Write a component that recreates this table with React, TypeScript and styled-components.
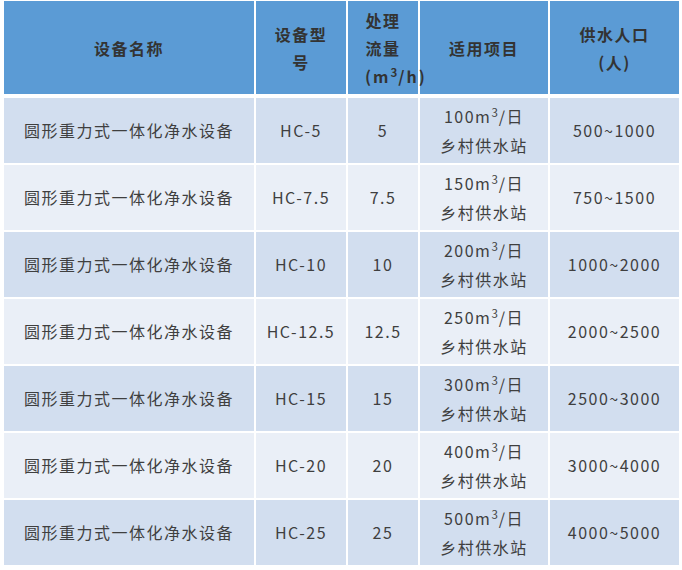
import React from 'react';
import styled, {createGlobalStyle} from 'styled-components';

const GlobalStyle = createGlobalStyle`
    html, body {
        margin: 0;
        padding: 0;
        background: #ffffff;
    }
    body {
        font-family: 'Noto Sans CJK SC', 'Noto Sans', sans-serif;
    }
`;

const COLUMNS = '250px 90px 70px 128px 129px';

const Page = styled.div`
    padding: 1px 0 0 4px;
`;

const Table = styled.div`
    display: flex;
    flex-direction: column;
    gap: 4px;
    width: 675px;
`;

const HeaderRow = styled.div`
    display: grid;
    grid-template-columns: ${COLUMNS};
    column-gap: 2px;
    height: 93px;
`;

const Body = styled.div`
    display: flex;
    flex-direction: column;
    gap: 2px;
`;

const Row = styled.div<{$alt: boolean}>`
    display: grid;
    grid-template-columns: ${COLUMNS};
    column-gap: 2px;
    height: 65px;

    & > div {
        background: ${(p) => (p.$alt ? '#eaeff7' : '#d2deef')};
    }
`;

// $over lifts a cell whose text runs past its right edge above the next cell
const HeadCell = styled.div<{$pad?: number; $over?: boolean}>`
    position: ${(p) => (p.$over ? 'relative' : 'static')};
    z-index: ${(p) => (p.$over ? 2 : 'auto')};
    display: flex;
    flex-direction: column;
    justify-content: center;
    text-align: center;
    padding: 0 ${(p) => p.$pad ?? 8}px;
    background: #5b9bd5;
    color: #333333;
    font-size: 16px;
    font-weight: 700;
    letter-spacing: 1.5px;
    line-height: 28px;
    white-space: nowrap;
    min-width: 0;
`;

const Cell = styled.div`
    display: flex;
    flex-direction: column;
    justify-content: center;
    text-align: center;
    padding: 0 6px;
    color: #3f3f3f;
    font-size: 16px;
    letter-spacing: 1.5px;
    line-height: 29px;
    white-space: nowrap;
    min-width: 0;
`;

const Line = styled.div<{$wide?: boolean}>`
    display: block;
    letter-spacing: ${(p) => (p.$wide ? '2px' : 'inherit')};
`;

const Sup = styled.sup`
    font-size: 0.72em;
    line-height: 0;
    vertical-align: 0.5em;
    letter-spacing: 1px;
`;

const rows = [
    {model: 'HC-5', flow: '5', daily: '100', people: '500~1000'},
    {model: 'HC-7.5', flow: '7.5', daily: '150', people: '750~1500'},
    {model: 'HC-10', flow: '10', daily: '200', people: '1000~2000'},
    {model: 'HC-12.5', flow: '12.5', daily: '250', people: '2000~2500'},
    {model: 'HC-15', flow: '15', daily: '300', people: '2500~3000'},
    {model: 'HC-20', flow: '20', daily: '400', people: '3000~4000'},
    {model: 'HC-25', flow: '25', daily: '500', people: '4000~5000'},
];

const App = () => {
    return (
        <Page>
            <GlobalStyle/>
            <Table>
                <HeaderRow>
                    <HeadCell>{'设备名称'}</HeadCell>
                    <HeadCell>
                        <Line>{'设备型'}</Line>
                        <Line>{'号'}</Line>
                    </HeadCell>
                    <HeadCell
                        $pad={17}
                        $over={true}
                    >
                        <Line>{'处理'}</Line>
                        <Line>{'流量'}</Line>
                        <Line $wide={true}>{'(m'}<Sup>{'3'}</Sup>{'/h)'}</Line>
                    </HeadCell>
                    <HeadCell>{'适用项目'}</HeadCell>
                    <HeadCell>
                        <Line>{'供水人口'}</Line>
                        <Line>{'(人)'}</Line>
                    </HeadCell>
                </HeaderRow>
                <Body>
                    {rows.map((r, i) => (
                        <Row
                            key={r.model}
                            $alt={i % 2 === 1}
                        >
                            <Cell>{'圆形重力式一体化净水设备'}</Cell>
                            <Cell>{r.model}</Cell>
                            <Cell>{r.flow}</Cell>
                            <Cell>
                                <Line>{r.daily}{'m'}<Sup>{'3'}</Sup>{'/日'}</Line>
                                <Line>{'乡村供水站'}</Line>
                            </Cell>
                            <Cell>{r.people}</Cell>
                        </Row>
                    ))}
                </Body>
            </Table>
        </Page>
    );
};

export default App;
